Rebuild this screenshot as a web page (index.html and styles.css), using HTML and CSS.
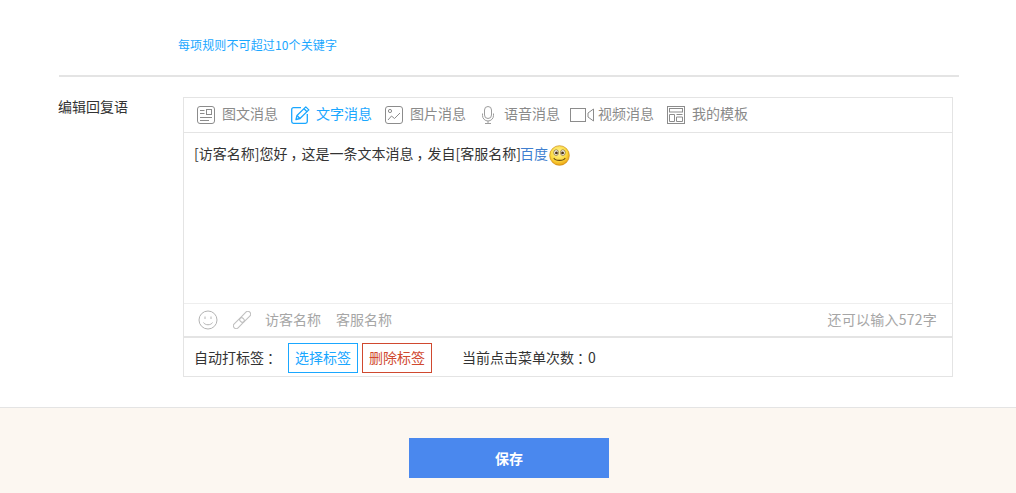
FILE: index.html
```html
<!DOCTYPE html>
<html lang="zh-CN">
<head>
<meta charset="utf-8">
<title>编辑回复语</title>
<link rel="stylesheet" href="styles.css">
</head>
<body>
<main class="page">
  <p class="hint">每项规则不可超过10个关键字</p>
  <div class="form-row">
    <div class="label">编辑回复语</div>
    <div class="editor">
      <nav class="tabs">
        <span class="tab tab-news">
          <svg width="18" height="18" viewBox="0 0 18 18" fill="none" stroke="#8c8c8c"><rect x=".5" y=".5" width="17" height="17" rx="2.500"/><rect x="9.500" y="3.500" width="5" height="5"/><path d="M3 4.500h4.500M3 7.500h4.500M3 11.500h12M3 14.500h9"/></svg>
          <span class="tab-label">图文消息</span>
        </span>
        <span class="tab tab-text active">
          <svg width="19" height="18" viewBox="0 0 19 18" fill="none" stroke="#1aa7ff" stroke-width="1.300"><path d="M10 1.700H2.500A1.800 1.800 0 0 0 .7 3.500v12a1.800 1.800 0 0 0 1.800 1.800h12a1.800 1.800 0 0 0 1.800-1.800V8"/><path d="M5 13.500l1-4L14.800.9l3 3L9 12.500z" stroke-linejoin="round"/><path d="M6 9.500l3 3M13 2.700l3 3"/></svg>
          <span class="tab-label">文字消息</span>
        </span>
        <span class="tab tab-image">
          <svg width="18" height="18" viewBox="0 0 18 18" fill="none" stroke="#8c8c8c"><rect x=".5" y=".5" width="17" height="17" rx="2.500"/><circle cx="5" cy="5" r="1.600"/><path d="M3 14l3.500-4 3 2.500L15 7"/></svg>
          <span class="tab-label">图片消息</span>
        </span>
        <span class="tab tab-voice">
          <svg width="12" height="18" viewBox="0 0 12 18" fill="none" stroke="#9c9c9c"><rect x="2.500" y=".5" width="7" height="12" rx="3.500"/><path d="M.5 7.500v2a5.500 5.500 0 0 0 11 0v-2M6 15v3M3 17.500h6"/></svg>
          <span class="tab-label">语音消息</span>
        </span>
        <span class="tab tab-video">
          <svg width="24" height="14" viewBox="0 0 24 14" fill="none" stroke="#8c8c8c"><rect x=".5" y=".5" width="15" height="13"/><path d="M23.500 1L18 5v4l5.500 4z"/></svg>
          <span class="tab-label">视频消息</span>
        </span>
        <span class="tab tab-tpl">
          <svg width="18" height="18" viewBox="0 0 18 18" fill="none" stroke="#8c8c8c"><rect x=".5" y=".5" width="17" height="17"/><rect x="2.500" y="2.500" width="13" height="3.500"/><path d="M2.500 8.500h5v7h-5zM9.500 8.500h6M9.500 11h6v4.500h-6z"/></svg>
          <span class="tab-label">我的模板</span>
        </span>
      </nav>
      <div class="content">[访客名称]您好<span class="punct">，</span>这是一条文本消息<span class="punct">，</span>发自[客服名称]<a class="link">百度</a><svg class="smiley" width="21" height="21" viewBox="0 0 22 22"><defs><radialGradient id="sm" cx=".45" cy=".35" r=".7"><stop offset="0" stop-color="#fff6a0"/><stop offset=".6" stop-color="#fcd93c"/><stop offset="1" stop-color="#e8950c"/></radialGradient></defs><circle cx="11" cy="11" r="10.300" fill="url(#sm)" stroke="#c98a14" stroke-width=".7"/><ellipse cx="7.500" cy="8" rx="2.500" ry="3" fill="#fff" stroke="#7a5a18" stroke-width=".7"/><ellipse cx="14.500" cy="8" rx="2.500" ry="3" fill="#fff" stroke="#7a5a18" stroke-width=".7"/><circle cx="7.800" cy="8.300" r="1.500" fill="#4a3010"/><circle cx="14.200" cy="8.300" r="1.500" fill="#4a3010"/><path d="M5 13.500c2 3.500 10 3.500 12 0" fill="none" stroke="#6a4a10" stroke-width="1.100"/></svg></div>
      <div class="tools">
        <svg width="20" height="20" viewBox="0 0 20 20" fill="none" stroke="#b4b4b4"><circle cx="10" cy="10" r="9"/><path d="M7 6.500v2.500M13 6.500v2.500"/><path d="M5.500 12.500c1.500 3 7.500 3 9 0"/></svg>
        <svg class="tool-link" width="18" height="18" viewBox="0 0 18 18" fill="none" stroke="#c0c0c0" stroke-width="1.100"><g transform="rotate(-45 9 9)"><rect x="-2" y="6.250" width="13" height="5.500" rx="2.750"/><rect x="7" y="6.250" width="13" height="5.500" rx="2.750"/></g></svg>
        <span class="var">访客名称</span>
        <span class="var">客服名称</span>
        <span class="count">还可以输入572字</span>
      </div>
      <div class="tags">
        <span class="tags-label">自动打标签<span class="punct">：</span></span>
        <button class="tag-btn select" type="button">选择标签</button>
        <button class="tag-btn remove" type="button">删除标签</button>
        <span class="clicks">当前点击菜单次数<span class="punct">：</span>0</span>
      </div>
    </div>
  </div>
</main>
<footer class="footer">
  <button class="save" type="button">保存</button>
</footer>
</body>
</html>
```
FILE: styles.css
```css
* { box-sizing: border-box; }
html, body { margin: 0; padding: 0; }
body {
  width: 1016px;
  height: 493px;
  overflow: hidden;
  background: #fff;
  font-family: "Noto Sans CJK SC", "Noto Sans", sans-serif;
  font-size: 14px;
  color: #333;
}
.page { padding: 0 57px 0 58px; height: 407px; }
.hint {
  margin: 0 0 0 1px;
  padding: 36px 0 0 119px;
  width: 900px;
  height: 77px;
  border-bottom: 2px solid #e4e4e4;
  font-size: 12px;
  line-height: 17px;
  letter-spacing: .12px;
  color: #1aa7ff;
}
.form-row { display: flex; padding-top: 20px; }
.label { width: 125px; line-height: 18px; color: #333; }
.editor {
  width: 770px;
  height: 280px;
  border: 1px solid #e4e4e4;
  display: flex;
  flex-direction: column;
}
.tabs {
  height: 35px;
  flex: none;
  display: flex;
  align-items: center;
  border-bottom: 1px solid #e4e4e4;
  color: #8a8a8a;
  line-height: 20px;
}
.tab {
  width: 94px;
  flex: none;
  display: flex;
  align-items: center;
  justify-content: flex-end;
  gap: 7px;
  white-space: nowrap;
}
.tab-label { margin-bottom: 5px; }
.tab-text { gap: 6px; }
.tab-voice { gap: 10px; }
.tab-video { gap: 4px; }
.active { color: #1aa7ff; }
.punct { font-feature-settings: "halt"; padding: 0 4px 0 3px; }
.content {
  height: 171px;
  flex: none;
  padding: 9px 10px 0;
  line-height: 22px;
  color: #333;
  border-bottom: 1px solid #eeeeee;
}
.link { color: #3f7fd0; margin-left: -1px; }
.smiley { vertical-align: top; margin: 3px 0 0 1px; }
.tools {
  height: 34px;
  flex: none;
  display: flex;
  align-items: center;
  padding: 0 15px 0 14px;
  color: #a6a6a6;
  border-bottom: 2px solid #e4e4e4;
}
.tool-link { margin-left: 15px; }
.var { margin: 0 0 2px 15px; }
.tool-link + .var { margin-left: 14px; }
.count { margin: 0 0 2px auto; letter-spacing: .25px; }
.tags {
  flex: 1;
  display: flex;
  align-items: center;
  padding: 2px 0 0 10px;
  color: #333;
}
.tags-label { width: 94px; margin-bottom: 2px; }
.tag-btn {
  width: 70px;
  height: 30px;
  padding: 0 0 2px;
  background: #fff;
  font: inherit;
  margin-right: 4px;
}
.select { border: 1px solid #1aa7ff; color: #1aa7ff; }
.remove { border: 1px solid #d0492f; color: #d0492f; }
.clicks { margin: 0 0 2px 26px; }
.footer {
  height: 86px;
  background: #fcf7f1;
  border-top: 1px solid #e4e4e4;
  padding: 30px 0 0 2px;
  display: flex;
  justify-content: center;
}
.save {
  width: 200px;
  height: 40px;
  border: 0;
  background: #4a88ee;
  color: #fff;
  font: inherit;
  font-weight: 700;
}
```
